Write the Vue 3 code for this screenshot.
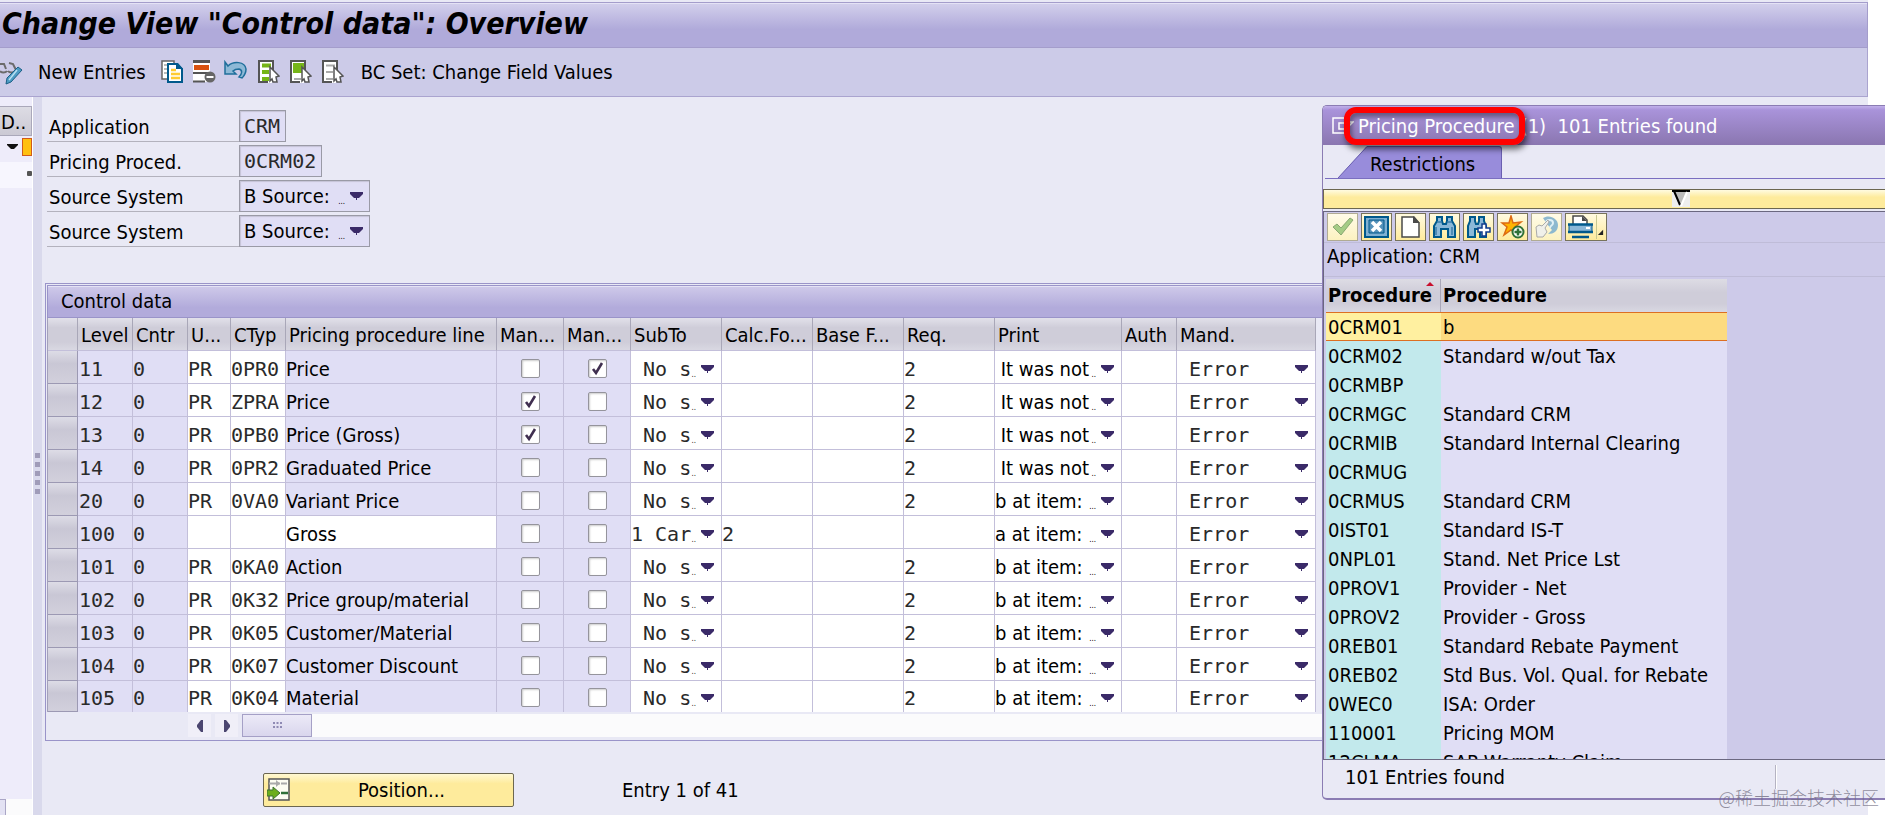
<template>
  <div class="screen">
    <div class="window">
      <header class="title-bar">
        <h1>Change View "Control data": Overview</h1>
      </header>

      <nav class="toolbar">
        <button class="tool first" aria-label="Display / Change">
          <svg width="24" height="26" viewBox="0 0 24 26">
            <path d="M0 5h4l2 5M9 4l4 1 3 6M0 12a4 3 0 0 0 7 0M8 12a4 3 0 0 0 7 0" fill="none" stroke="#6b6b6b" stroke-width="2" />
            <path d="M18 8l4 3-11 12-5 2 1-6z" fill="#4d9cc4" stroke="#1c5f86" />
            <path d="M17 11l-8 10" stroke="#b9e0f2" stroke-width="1.5" />
          </svg>
        </button>
        <button class="tool text">New Entries</button>
        <button class="tool" aria-label="Copy As">
          <svg width="24" height="26" viewBox="0 0 24 26">
            <path d="M2 2h12v18H2z" fill="#fff" stroke="#666" stroke-width="1.5" />
            <path d="M4 6h4M4 10h3M4 14h3" stroke="#bbb" stroke-width="2" />
            <path d="M8 5h9l5 5v13H8z" fill="#fff" stroke="#00598c" stroke-width="2" />
            <path d="M16 4h2l5 6h-7z" fill="#00598c" />
            <path d="M11 11h5M11 15h9M11 19h9" stroke="#fc3" stroke-width="2.4" />
          </svg>
        </button>
        <button class="tool" aria-label="Delete">
          <svg width="24" height="26" viewBox="0 0 24 26">
            <path d="M1 1h17v22H1z" fill="#fff" />
            <path d="M1 2.5h17" stroke="#555" stroke-width="3" />
            <path d="M2 6h15v5H2z" fill="#d9520f" />
            <path d="M1 14h16M1 22.500h12" stroke="#555" stroke-width="2" />
            <circle cx="18" cy="18" r="5.5" fill="#666" />
            <path d="M14.5 18h7" stroke="#fff" stroke-width="2" />
          </svg>
        </button>
        <button class="tool" aria-label="Undo Change">
          <svg width="24" height="26" viewBox="0 0 24 26">
            <path d="M1 3l3 4c5-5 17-5 18 3 0 4-2 7-4 9l-3-1c3-3 4-7 0-8-3 0-5 1-6 2l3 3H1z" fill="#8db9d6" stroke="#1f6f9b" stroke-width="1.5" />
          </svg>
        </button>
        <button v-for="kind in selectTools" :key="kind.label" class="tool" :aria-label="kind.label">
          <svg width="24" height="26" viewBox="0 0 24 26">
            <path d="M2 2h14v22H2z" fill="#fff" />
            <path d="M17 12V2H3v21h9" fill="none" stroke="#555" stroke-width="2" />
            <path d="M6 6.5h9M6 13h7M6 20h7" :stroke="kind.line" :stroke-width="kind.weight" />
            <path v-if="kind.block" d="M5 4h11v10H5z" fill="#76b518" />
            <path d="M14 8l9 9-3 1 1 5-4 0-1-3-2 2z" fill="#fff" stroke="#555" stroke-width="1.5" />
          </svg>
        </button>
        <button class="tool text last">BC Set: Change Field Values</button>
      </nav>

      <div class="workspace">
        <aside class="tree">
          <div class="tree-head">D..</div>
          <div class="tree-row">
            <svg width="13" height="8" viewBox="0 0 13 8"><path d="M1 1h11v1L8 6H5L1 2z" fill="#111" /></svg>
            <span class="folder"></span>
          </div>
          <div class="tree-row leaf"><span class="node"></span></div>
          <div class="tree-scroll"><span></span></div>
        </aside>
        <div class="splitter">
          <i v-for="n in 5" :key="n"></i>
        </div>

        <main class="content">
          <form class="fields" @submit.prevent>
            <div v-for="field in fields" :key="field.id" class="field-row">
              <label :for="field.id">{{ field.label }}</label>
              <span v-if="field.select" class="pick box">
                <select :id="field.id"><option>{{ field.value }}</option></select>
                <span class="pick-mark">
                  <span class="dots">...</span>
                  <svg width="13" height="8" viewBox="0 0 13 8"><path d="M0 0h13v2l-4 4H7v2H6V6H4L0 2z" fill="#3a2a68" /></svg>
                </span>
              </span>
              <input v-else :id="field.id" class="box mono" :class="field.size" :value="field.value" readonly />
            </div>
          </form>

          <section class="group">
            <h2>Control data</h2>
            <table class="grid">
              <colgroup>
                <col v-for="col in columns" :key="col.key" :class="'w-' + col.size" />
              </colgroup>
              <thead>
                <tr>
                  <th v-for="col in columns" :key="col.key">{{ col.title }}</th>
                </tr>
              </thead>
              <tbody>
                <tr v-for="row in rows" :key="row.level">
                  <td class="selector"></td>
                  <td class="mono locked level">{{ row.level }}</td>
                  <td class="mono locked">0</td>
                  <td><input class="cell mono" :value="row.usage" aria-label="Usage" /></td>
                  <td><input class="cell mono" :value="row.ctyp" aria-label="CTyp" /></td>
                  <td :class="{ locked: row.ctyp }">{{ row.line }}</td>
                  <td class="locked check"><input type="checkbox" :checked="row.manual" aria-label="Manual" /></td>
                  <td class="locked check"><input type="checkbox" :checked="row.mandatory" aria-label="Mandatory" /></td>
                  <td>
                    <span class="pick mono">
                      <select aria-label="SubTo"><option>{{ row.subTo }}</option></select>
                      <span class="pick-mark">
                        <span class="dots">..</span>
                        <svg width="13" height="8" viewBox="0 0 13 8"><path d="M0 0h13v2l-4 4H7v2H6V6H4L0 2z" fill="#3a2a68" /></svg>
                      </span>
                    </span>
                  </td>
                  <td><input class="cell mono" :value="row.calc" aria-label="Calc. formula" /></td>
                  <td><input class="cell mono" aria-label="Base formula" /></td>
                  <td><input class="cell mono" :value="row.req" aria-label="Requirement" /></td>
                  <td>
                    <span class="pick">
                      <select aria-label="Print"><option>{{ row.print }}</option></select>
                      <span class="pick-mark">
                        <span class="dots">{{ row.print.endsWith(':') ? '...' : '..' }}</span>
                        <svg width="13" height="8" viewBox="0 0 13 8"><path d="M0 0h13v2l-4 4H7v2H6V6H4L0 2z" fill="#3a2a68" /></svg>
                      </span>
                    </span>
                  </td>
                  <td><input class="cell mono" aria-label="Auth" /></td>
                  <td>
                    <span class="pick mono">
                      <select aria-label="Mand."><option>&nbsp;Error</option></select>
                      <span class="pick-mark">
                        <svg width="13" height="8" viewBox="0 0 13 8"><path d="M0 0h13v2l-4 4H7v2H6V6H4L0 2z" fill="#3a2a68" /></svg>
                      </span>
                    </span>
                  </td>
                </tr>
              </tbody>
            </table>
            <div class="scroll">
              <button aria-label="Scroll left">
                <svg width="8" height="12" viewBox="0 0 8 12"><path d="M7 0v12H5L1 7V5l4-5z" fill="#4b4670" /></svg>
              </button>
              <button aria-label="Scroll right">
                <svg width="8" height="12" viewBox="0 0 8 12"><path d="M1 0v12h2l4-5V5L3 0z" fill="#4b4670" /></svg>
              </button>
              <div class="track">
                <div class="thumb">
                  <svg width="9" height="7" viewBox="0 0 9 7"><path d="M0 1h9M0 5h9" stroke="#8f8ab4" stroke-width="2" stroke-dasharray="2 1.5" /></svg>
                </div>
              </div>
            </div>
          </section>

          <div class="position">
            <button class="position-btn">
              <svg width="23" height="24" viewBox="0 0 23 24">
                <path d="M2 1h20v21H2z" fill="#fdfdf2" stroke="#555" stroke-width="1.5" />
                <path d="M2 5.500h11M14 5.5h6" stroke="#aaa" stroke-width="2" />
                <path d="M9 2l4 3.5L9 9z" fill="#aaa" />
                <path d="M14 15h7" stroke="#2f7038" stroke-width="2.5" />
                <path d="M0 12h6V9l7 6-7 6v-3H0z" fill="#6cae1c" stroke="#3a7230" />
              </svg>
              <span>Position...</span>
            </button>
            <span>Entry 1 of 41</span>
          </div>
        </main>
      </div>
    </div>

    <div class="dialog" role="dialog" aria-label="Pricing Procedure">
      <div class="dialog-title">
        <svg width="22" height="18" viewBox="0 0 22 18">
          <path d="M12 1H1v15h13v-4" fill="none" stroke="#fff" stroke-width="1.5" />
          <path d="M7 6h6v6H7zM14 5h7l-6 6" fill="none" stroke="#fff" stroke-width="1.5" />
        </svg>
        <span class="marked">Pricing Procedure</span>
        <span>(1)&nbsp; 101 Entries found</span>
      </div>
      <div class="tabs">
        <svg class="tab-edge" width="32" height="32" viewBox="0 0 32 32" preserveAspectRatio="none">
          <path d="M0 32L29 0h3v32z" fill="#988cdb" />
          <path d="M0 32L29 .5h3" fill="none" stroke="#6a5fb0" />
        </svg>
        <button class="tab">Restrictions</button>
      </div>
      <button class="expander" aria-label="Show restrictions">
        <svg width="18" height="17" viewBox="0 0 18 17">
          <path d="M0 0h18v17H0z" fill="#eee" />
          <path d="M1 1h15L8 16z" fill="#bbb" />
          <path d="M0 1h18M2 1l6 14" stroke="#000" stroke-width="2" />
          <path d="M15 2L9 16" stroke="#fff" stroke-width="2" />
        </svg>
      </button>
      <div class="hits">
        <div class="hit-tools">
          <button class="off" aria-label="Copy">
            <svg width="25" height="24" viewBox="0 0 25 24"><path d="M3 12l4-3 4 4 9-10 3 2-12 15z" fill="#a5cc85" stroke="#89a872" /></svg>
          </button>
          <button aria-label="Close">
            <svg width="25" height="24" viewBox="0 0 25 24">
              <path d="M1 2h23v20H1z" fill="#7fb0d2" stroke="#00598c" stroke-width="2" />
              <path d="M5 5h15v13H5z" fill="#5692ba" stroke="#00598c" />
              <path d="M8 7l9 9M17 7l-9 9" stroke="#fff" stroke-width="3.5" />
            </svg>
          </button>
          <button aria-label="New selection">
            <svg width="25" height="24" viewBox="0 0 25 24">
              <path d="M4 2h12l5 6v14H4z" fill="#fff" stroke="#4a4a4a" stroke-width="1.5" />
              <path d="M15 1l7 7h-7z" fill="#4a4a4a" />
            </svg>
          </button>
          <button aria-label="Find">
            <svg width="25" height="24" viewBox="0 0 25 24">
              <path d="M5 2h5v4l1 3h3l1-3V2h5v4l3 5v11h-7v-8h-7v8H2V11l3-5z" fill="#8bb8d8" stroke="#00598c" stroke-width="2" />
              <path d="M5 7h5M15 7h5M4 20V12M20 20v-8" stroke="#3a7cab" stroke-width="1.5" />
            </svg>
          </button>
          <button aria-label="Find next">
            <svg width="25" height="24" viewBox="0 0 25 24">
              <path d="M4 2h5v4l1 3h2l1-3V2h5v4l2 5v11h-6v-8h-5v8H2V11l2-5z" fill="#8bb8d8" stroke="#00598c" stroke-width="2" />
              <path d="M16 9h4v4h4v4h-4v4h-4v-4h-4v-4h4z" fill="#fff" stroke="#123c8c" stroke-width="1.5" />
            </svg>
          </button>
          <button aria-label="Add to favorites">
            <svg width="25" height="24" viewBox="0 0 25 24">
              <path d="M11 1l2 7 8-1-6 5 3 7-7-4-7 5 3-8-5-4h7z" fill="#ffb400" stroke="#dd6a12" stroke-width="1.5" />
              <circle cx="18" cy="17" r="5.5" fill="#fff" stroke="#2f7038" stroke-width="2" />
              <path d="M14.5 17h7M18 13.5v7" stroke="#2f7038" stroke-width="2.5" />
            </svg>
          </button>
          <button class="off" aria-label="Help">
            <svg width="25" height="24" viewBox="0 0 25 24">
              <path d="M9 3c6-4 15 0 15 7 0 6-4 9-10 9l4-4-5-6z" fill="#8db9cf" />
              <path d="M12 8c0-4 7-4 7 0 0 3-3 2-3 5" fill="none" stroke="#dff0f6" stroke-width="2" />
              <path d="M2 12l3-2 3 1 6-6 1 2-4 6 2 4-4 5H3z" fill="#f0f0ea" stroke="#aaa" />
            </svg>
          </button>
          <button class="print" aria-label="Print">
            <svg width="25" height="24" viewBox="0 0 25 24">
              <path d="M5 9V1h10l4 4v4" fill="#fff" stroke="#4a4a4a" stroke-width="1.5" />
              <path d="M14 1l5 5h-5z" fill="#4a4a4a" />
              <path d="M1 9h23v9H1z" fill="#8bb8d8" />
              <path d="M0 9.500h25M0 17h25M4 22h17" stroke="#00598c" stroke-width="2.5" />
              <path d="M1 9v9M24 9v9" stroke="#00598c" />
              <path d="M18 13h4" stroke="#fff" stroke-width="2" />
            </svg>
            <svg class="corner" width="8" height="24" viewBox="0 0 8 24"><path d="M7 15v6H1z" fill="#222" /></svg>
          </button>
        </div>
        <p class="criteria">Application: CRM</p>
        <table class="hit-list">
          <thead>
            <tr>
              <th>Procedure<i class="sorted"></i></th>
              <th>Procedure</th>
            </tr>
          </thead>
          <tbody>
            <tr v-for="(hit, i) in hits" :key="hit[0]" :class="{ active: i === 0 }">
              <td>{{ hit[0] }}</td>
              <td>{{ hit[1] }}</td>
            </tr>
          </tbody>
        </table>
      </div>
      <footer class="dialog-foot">
        <span>101 Entries found</span>
        <i></i>
      </footer>
    </div>

    <span class="watermark">@稀土掘金技术社区</span>
  </div>
</template>

<script setup>
const selectTools = [
  { label: 'Select All', line: '#76b518', weight: 4 },
  { label: 'Select Block', line: '#aaa', weight: 2, block: true },
  { label: 'Deselect All', line: '#aaa', weight: 2 }
]

const fields = [
  { id: 'application', label: 'Application', value: 'CRM', size: 'short' },
  { id: 'procedure', label: 'Pricing Proced.', value: '0CRM02', size: 'medium' },
  { id: 'source-1', label: 'Source System', value: 'B Source:', select: true },
  { id: 'source-2', label: 'Source System', value: 'B Source:', select: true }
]

// size picks the column width class
const columns = [
  { key: 'sel', title: '', size: 'sel' },
  { key: 'level', title: 'Level', size: 'code' },
  { key: 'cntr', title: 'Cntr', size: 'code' },
  { key: 'usage', title: 'U...', size: 'usage' },
  { key: 'ctyp', title: 'CTyp', size: 'code' },
  { key: 'line', title: 'Pricing procedure line', size: 'line' },
  { key: 'man1', title: 'Man...', size: 'check' },
  { key: 'man2', title: 'Man...', size: 'check' },
  { key: 'subto', title: 'SubTo', size: 'std' },
  { key: 'calc', title: 'Calc.Fo...', size: 'std' },
  { key: 'base', title: 'Base F...', size: 'std' },
  { key: 'req', title: 'Req.', size: 'std' },
  { key: 'print', title: 'Print', size: 'print' },
  { key: 'auth', title: 'Auth', size: 'code' },
  { key: 'mand', title: 'Mand.', size: 'mand' }
]

const NO_SUB = '\u00a0No s'
const NOT_PRINTED = '\u00a0It was not'

const makeRow = (level, ctyp, line, print, extra = {}) => ({
  level,
  usage: ctyp ? 'PR' : '',
  ctyp,
  line,
  print,
  subTo: NO_SUB,
  calc: '',
  req: '2',
  manual: false,
  mandatory: false,
  ...extra
})

const rows = [
  makeRow(11, '0PR0', 'Price', NOT_PRINTED, { mandatory: true }),
  makeRow(12, 'ZPRA', 'Price', NOT_PRINTED, { manual: true }),
  makeRow(13, '0PB0', 'Price (Gross)', NOT_PRINTED, { manual: true }),
  makeRow(14, '0PR2', 'Graduated Price', NOT_PRINTED),
  makeRow(20, '0VA0', 'Variant Price', 'b at item:'),
  makeRow(100, '', 'Gross', 'a at item:', { subTo: '1 Car', calc: '2', req: '' }),
  makeRow(101, '0KA0', 'Action', 'b at item:'),
  makeRow(102, '0K32', 'Price group/material', 'b at item:'),
  makeRow(103, '0K05', 'Customer/Material', 'b at item:'),
  makeRow(104, '0K07', 'Customer Discount', 'b at item:'),
  makeRow(105, '0K04', 'Material', 'b at item:')
]

const hits = [
  ['0CRM01', 'b'],
  ['0CRM02', 'Standard w/out Tax'],
  ['0CRMBP', ''],
  ['0CRMGC', 'Standard CRM'],
  ['0CRMIB', 'Standard Internal Clearing'],
  ['0CRMUG', ''],
  ['0CRMUS', 'Standard CRM'],
  ['0IST01', 'Standard IS-T'],
  ['0NPL01', 'Stand. Net Price Lst'],
  ['0PROV1', 'Provider - Net'],
  ['0PROV2', 'Provider - Gross'],
  ['0REB01', 'Standard Rebate Payment'],
  ['0REB02', 'Std Bus. Vol. Qual. for Rebate'],
  ['0WEC0', 'ISA: Order'],
  ['110001', 'Pricing MOM'],
  ['12CLMA', 'SAP Warranty Claim']
]
</script>

<style>
body {
  background: #fff;
}
</style>

<style scoped>
* {
  box-sizing: border-box;
}

.screen {
  position: relative;
  min-height: 100vh;
  overflow: hidden;
  font-family: "DejaVu Sans Condensed", "Noto Sans", sans-serif;
  font-size: 20px;
  line-height: 24px;
  color: #000;
}

button,
input,
select {
  font: inherit;
  color: inherit;
  margin: 0;
  padding: 0;
  border: 0;
  border-radius: 0;
  background: none;
}

svg {
  display: block;
  flex: none;
}

h1,
h2,
p {
  margin: 0;
}

.mono {
  font-family: "DejaVu Sans Mono", monospace;
  color: #2a2a2a;
}

.window {
  display: flex;
  flex-direction: column;
  height: 100vh;
  margin-right: 17px;
  background: #e9e9f5;
}

.title-bar {
  flex: none;
  height: 46px;
  margin-top: 2px;
  padding: 3px 2px 0;
  border: 1px solid #a49dcb;
  border-left: 0;
  background: linear-gradient(#d3d0ec, #b0aada 60%, #b0aada);
  box-shadow: inset 0 1px 0 #e4e2f5;
}

.title-bar h1 {
  font-size: 30px;
  line-height: 36px;
  font-style: italic;
  font-weight: bold;
  white-space: nowrap;
}

.toolbar {
  display: flex;
  flex: none;
  align-items: center;
  gap: 8px;
  height: 49px;
  border: 1px solid #aaa4cf;
  border-width: 0 1px 1px 0;
  background: #cccbe8;
}

.tool {
  display: flex;
  align-items: center;
  height: 26px;
  white-space: nowrap;
}

.tool.text {
  padding: 0 6px 0 6px;
}

.tool.last {
  padding-left: 9px;
}

.workspace {
  display: flex;
  flex: 1;
  min-height: 0;
}

.tree {
  display: flex;
  flex-direction: column;
  flex: none;
  width: 33px;
  padding-top: 9px;
  overflow: hidden;
  border-right: 1px solid #fff;
  background: #eeecfa;
}

.tree-head {
  height: 30px;
  padding: 1px 0 0 1px;
  border: 1px solid #aaa8ba;
  border-left: 0;
  line-height: 28px;
  background: linear-gradient(#dddce4, #cbc9d4);
}

.tree-row {
  display: flex;
  align-items: center;
  gap: 3px;
  height: 26px;
  padding: 0 0 4px 6px;
}

.tree-row.leaf {
  justify-content: flex-end;
  background: #f7f6fe;
}

.folder {
  width: 16px;
  height: 18px;
  border: 1px solid #d05a1c;
  background: #ffc010;
}

.node {
  width: 5px;
  height: 5px;
  border-radius: 1px;
  background: #555;
}

.tree-scroll {
  height: 16px;
  margin-top: auto;
  background: #fbfbfc;
}

.tree-scroll span {
  display: block;
  width: 6px;
  height: 16px;
  border: 1px solid #aaa6c6;
  border-width: 1px 1px 0 0;
  background: #e3e2f3;
}

.splitter {
  display: flex;
  flex-direction: column;
  align-items: center;
  justify-content: center;
  flex: none;
  gap: 4px;
  width: 9px;
  padding-bottom: 28px;
  padding-top: 62px;
  background: #d9d9ec;
}

.splitter i {
  width: 5px;
  height: 5px;
  background: #a09cb9;
}

.content {
  flex: 1;
  min-width: 0;
  padding: 13px 0 0 3px;
  overflow: hidden;
}

.fields {
  display: flex;
  flex-direction: column;
  gap: 3px;
  padding-left: 2px;
}

.field-row {
  display: flex;
  height: 32px;
}

.field-row label {
  width: 192px;
  padding: 5px 0 0 2px;
  border-bottom: 1px solid #b3b2bd;
}

.box {
  height: 32px;
  padding-left: 4px;
  border: 1px solid #9a9aa6;
  background: #e0def5;
  box-shadow: inset 1px 1px 1px #c5c3d6;
}

.box.short {
  width: 47px;
}

.box.medium {
  width: 83px;
}

.box.pick {
  width: 131px;
}

.pick {
  display: grid;
  align-items: center;
  height: 32px;
}

.pick > * {
  grid-area: 1 / 1;
}

.pick select {
  appearance: none;
  width: 100%;
  height: 28px;
  outline: 0;
}

.pick-mark {
  display: flex;
  align-items: center;
  justify-self: end;
  gap: 5px;
  padding-right: 6px;
  pointer-events: none;
}

.dots {
  padding-top: 12px;
  font-family: "DejaVu Sans Condensed", sans-serif;
  font-size: 8px;
  line-height: 12px;
}

.group {
  margin-top: 36px;
  padding: 1px;
  border: 1px solid #9a94c9;
}

.group h2 {
  height: 33px;
  padding-left: 13px;
  border: 1px solid #9a94c9;
  font-size: 20px;
  font-weight: normal;
  line-height: 31px;
  background: linear-gradient(#cfcaea, #b2abdb 70%, #b2abdb);
  box-shadow: inset 0 1px 0 #e4e2f5;
}

.grid {
  width: 1269px;
  table-layout: fixed;
  border-spacing: 0;
  border-left: 1px solid #a3a0ba;
}

.w-sel { width: 30px; }
.w-code { width: 55px; }
.w-usage { width: 43px; }
.w-line { width: 211px; }
.w-check { width: 67px; }
.w-std { width: 91px; }
.w-print { width: 127px; }
.w-mand { width: 139px; }

.grid th,
.grid td {
  height: 33px;
  padding: 3px 0 0;
  border-right: 1px solid #c3bfda;
  border-bottom: 1px solid #c3bfda;
  overflow: hidden;
  text-align: left;
  font-weight: normal;
  white-space: nowrap;
  background: #fff;
}

.grid th {
  padding: 2px 0 0 3px;
  border-right-color: #a9a7b8;
  background: linear-gradient(#e2e1ea, #cfcdd9 30%, #cfcdd9 75%, #d9d8e2);
}

.grid tbody tr:last-child td {
  height: 31px;
  border-bottom: 0;
}

.grid .locked {
  background: #e0def5;
}

.grid td.level {
  padding-left: 1px;
}

.grid td.selector {
  border-color: #9c99b3;
  background: linear-gradient(#dddce6, #c9c7d5 40%, #d2d0dc);
}

.grid tbody tr:last-child td.selector {
  border-bottom: 1px solid #9c99b3;
}

.grid .pick {
  height: 28px;
}

.cell {
  display: block;
  width: 100%;
  height: 28px;
  outline: 0;
}

.grid .check {
  padding-top: 2px;
}

.check input {
  display: block;
  appearance: none;
  width: 19px;
  height: 19px;
  margin: 0 auto;
  border: 1px solid #95949c;
  border-radius: 2px;
  background: #fff;
  box-shadow: inset 1px 1px 2px #ccc;
}

.check input:checked {
  background: #fff url("data:image/svg+xml,%3Csvg xmlns='http://www.w3.org/2000/svg' viewBox='0 0 17 17'%3E%3Cpath d='M4 9l3 4 6-10' fill='none' stroke='%23402f50' stroke-width='2.6'/%3E%3C/svg%3E") center / 17px no-repeat;
}

.grid .pick-mark {
  padding-right: 7px;
}

.scroll {
  display: flex;
  gap: 4px;
  height: 27px;
  padding: 2px 0 2px 141px;
}

.scroll button {
  display: flex;
  align-items: center;
  justify-content: center;
  width: 23px;
  background: #f0eff8;
}

.track {
  flex: 1;
  background: #fbfbfc;
}

.thumb {
  display: flex;
  align-items: center;
  justify-content: center;
  width: 70px;
  height: 23px;
  border: 1px solid #a5a0c6;
  background: linear-gradient(#eceaf7, #d9d6ed);
}

.position {
  display: flex;
  align-items: center;
  gap: 108px;
  margin: 32px 0 0 218px;
}

.position-btn {
  display: flex;
  align-items: center;
  width: 251px;
  height: 34px;
  padding-left: 3px;
  border: 1px solid #6c6750;
  border-radius: 2px;
  background: linear-gradient(#fff8d2, #feeb9c 30%, #feeb9c);
}

.position-btn span {
  flex: 1;
}

.dialog {
  position: absolute;
  top: 105px;
  right: 0;
  display: flex;
  flex-direction: column;
  width: 563px;
  height: 695px;
  border: 1px solid #8b7cb3;
  border-width: 1px 0 2px 1px;
  border-radius: 5px 0 0 5px;
  background: #e9e9f5;
}

.dialog-title {
  display: flex;
  align-items: center;
  flex: none;
  height: 39px;
  padding-left: 9px;
  border-radius: 4px 0 0 0;
  color: #fff;
  white-space: nowrap;
  background: linear-gradient(#c1b0ea, #a993da 10%, #8a76b0);
}

.marked {
  z-index: 1;
  margin: 0 -4px 0 -10px;
  padding: 1px 4px 1px 8px;
  border: 6px solid #f00;
  border-radius: 12px;
  box-shadow: 2px 4px 6px rgba(0, 0, 0, 0.6), inset 2px 4px 5px rgba(0, 0, 0, 0.4);
}

.tabs {
  display: flex;
  flex: none;
  height: 34px;
  margin-left: 2px;
  padding: 1px 0 0 13px;
  border-bottom: 1px solid #7a6ec0;
}

.tab {
  width: 132px;
  padding: 2px 28px 0 0;
  border: 1px solid #6a5fb0;
  border-width: 1px 1px 0 0;
  border-radius: 0 3px 0 0;
  background: #988cdb;
}

.expander {
  display: flex;
  justify-content: center;
  flex: none;
  height: 20px;
  margin-top: 10px;
  padding-left: 152px;
  border: 1px solid #6c6750;
  border-right: 0;
  background: linear-gradient(#fffbe0, #feeb9c 40%, #feeb9c);
}

.hits {
  flex: 1;
  min-height: 0;
  margin-top: 2px;
  overflow: hidden;
  border: 1px solid #6b6880;
  border-right: 0;
  background: #cdcae9;
}

.hit-tools {
  display: flex;
  gap: 3px;
  height: 31px;
  padding: 1px 0 2px 3px;
  border-bottom: 1px solid #bfbcd8;
}

.hit-tools button {
  display: flex;
  align-items: center;
  justify-content: center;
  width: 31px;
  height: 28px;
  border: 1px solid #77735c;
  background: linear-gradient(#fffae0, #feeb9c);
}

.hit-tools .off {
  border-color: #b0ab94;
  background: linear-gradient(#fffbe8, #fcf2c0);
}

.hit-tools .print {
  width: 42px;
  gap: 3px;
}

.corner {
  border-left: 1px solid #c8c890;
}

.criteria {
  height: 34px;
  padding: 1px 0 0 3px;
  border-bottom: 1px solid #bfbcd8;
}

.hit-list {
  width: 401px;
  margin: 2px 0 0 2px;
  table-layout: fixed;
  border-spacing: 0;
}

.hit-list th {
  position: relative;
  height: 33px;
  padding: 0 0 2px 2px;
  text-align: left;
  background: linear-gradient(#dddce4, #cfcdd9 40%, #cfcdd9 75%, #d9d8e2);
}

.hit-list th:first-child {
  width: 115px;
  border-right: 1px solid #a9a7b8;
}

.sorted {
  position: absolute;
  top: 3px;
  right: 6px;
  border: 4px solid transparent;
  border-top: 0;
  border-bottom: 4px solid #c8102e;
}

.hit-list td {
  height: 29px;
  padding: 0 0 0 2px;
  white-space: nowrap;
  background: #e0def5;
}

.hit-list td:first-child {
  background: #c2e9ec;
}

.hit-list .active td {
  border: 1px solid #dd6f22;
  border-width: 1px 0;
  background: #fddb80;
}

.hit-list .active td:first-child {
  background: #fff0a0;
}

.dialog-foot {
  display: flex;
  align-items: center;
  flex: none;
  height: 38px;
  padding: 0 0 4px 22px;
}

.dialog-foot span {
  flex: 1;
}

.dialog-foot i {
  width: 2px;
  height: 24px;
  margin-right: 108px;
  border-left: 1px solid #b5b3c2;
  background: #fff;
}

.watermark {
  position: absolute;
  right: 6px;
  bottom: 6px;
  font-family: "Noto Sans CJK SC", sans-serif;
  font-size: 18px;
  font-weight: 300;
  color: rgba(110, 105, 125, 0.75);
}
</style>
